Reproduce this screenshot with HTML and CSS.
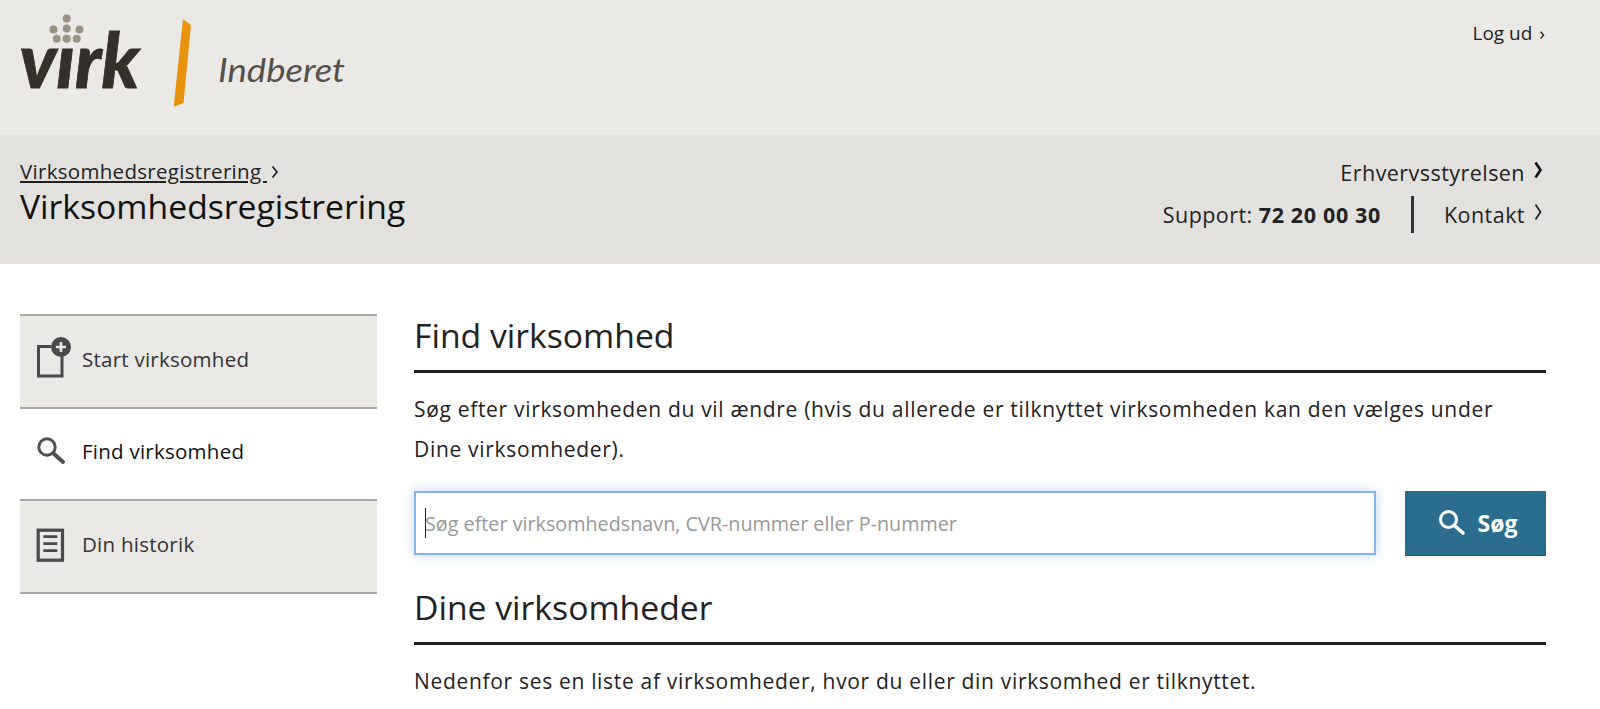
FILE: index.html
```html
<html>
<head>
	<title>Virksomhedsregistrering</title>
	<meta http-equiv="Content-Type" content="text/html; charset=UTF-8">
	<link rel="stylesheet" href="styles.css">
</head>
<body>
	<div class="top-bar">
		<svg class="logo" width="360" height="115" viewBox="0 0 360 115">
			<text class="logo-virk" x="19.5" y="88" textLength="120" lengthAdjust="spacingAndGlyphs">virk</text>
			<rect x="50" y="12" width="34" height="36" fill="#eae9e5"></rect>
			<g fill="#9a9385">
				<circle cx="66.7" cy="18.5" r="4"></circle>
				<circle cx="53.5" cy="29.5" r="4"></circle>
				<circle cx="66.7" cy="28.5" r="4"></circle>
				<circle cx="79.5" cy="29.5" r="4"></circle>
				<circle cx="56.7" cy="38.7" r="4"></circle>
				<circle cx="66.7" cy="38.7" r="4"></circle>
				<circle cx="76.7" cy="38.7" r="4"></circle>
			</g>
			<polygon points="183,19 191,25 183.5,103 173.7,106.7" fill="#e8920e"></polygon>
			<text class="logo-name" x="218" y="82" textLength="127" lengthAdjust="spacingAndGlyphs">Indberet</text>
		</svg>
		<a class="logout">Log ud <span class="logout-arrow">›</span></a>
	</div>

	<div class="sub-bar">
		<div class="sub-left">
			<div class="crumb"><a>Virksomhedsregistrering </a><svg class="chev-small" width="8" height="14" viewBox="0 0 8 14"><path d="M1.5 1.5 L6 7 L1.5 12.5" fill="none" stroke="#222" stroke-width="1.7"></path></svg></div>
			<div class="page-title">Virksomhedsregistrering</div>
		</div>
		<div class="sub-right">
			<div class="sub-row">
				<a>Erhvervsstyrelsen</a>
				<svg class="chev" width="10" height="18" viewBox="0 0 10 18"><path d="M1.5 1.5 L6.5 9 L1.5 16.5" fill="none" stroke="#111" stroke-width="2.6"></path></svg>
			</div>
			<div class="sub-row">
				<span>Support: <b>72 20 00 30</b></span>
				<span class="divider"></span>
				<a>Kontakt</a>
				<svg class="chev" width="10" height="18" viewBox="0 0 10 18"><path d="M1.5 1.5 L6.5 9 L1.5 16.5" fill="none" stroke="#222" stroke-width="1.8"></path></svg>
			</div>
		</div>
	</div>

	<div class="page">
		<div class="side-menu">
			<div class="menu-item">
				<svg class="menu-icon raised" width="36" height="42" viewBox="0 0 36 42">
					<path d="M15 10.5 H2.5 V40 H26 V20" fill="none" stroke="#4a4a4a" stroke-width="3"></path>
					<circle cx="25" cy="11" r="10" fill="#4a4a4a"></circle>
					<path d="M25 6 V16 M20 11 H30" stroke="#eae9e5" stroke-width="2.6"></path>
				</svg>
				<span class="menu-label">Start virksomhed</span>
			</div>
			<div class="menu-item active">
				<svg class="menu-icon" width="36" height="32" viewBox="0 0 36 32">
					<circle cx="11" cy="11" r="8.2" fill="none" stroke="#4f4f4f" stroke-width="3"></circle>
					<path d="M17.5 17.5 L27 26" stroke="#4f4f4f" stroke-width="4" stroke-linecap="round"></path>
				</svg>
				<span class="menu-label">Find virksomhed</span>
			</div>
			<div class="menu-item">
				<svg class="menu-icon" width="36" height="34" viewBox="0 0 36 34">
					<rect x="2.2" y="2.2" width="24.3" height="30" fill="none" stroke="#4a4a4a" stroke-width="3.2"></rect>
					<path d="M7.3 8.7 H21.3 M7.3 15.7 H21.3 M7.3 22.7 H21.3" stroke="#4a4a4a" stroke-width="2.8"></path>
				</svg>
				<span class="menu-label">Din historik</span>
			</div>
		</div>

		<div class="main-col">
			<h2 class="section-head">Find virksomhed</h2>
			<p class="intro">Søg efter virksomheden du vil ændre (hvis du allerede er tilknyttet virksomheden kan den vælges under Dine virksomheder).</p>
			<div class="search-row">
				<div class="search-input">
					<span class="caret"></span>
					<span class="placeholder">Søg efter virksomhedsnavn, CVR-nummer eller P-nummer</span>
				</div>
				<div class="search-button">
					<svg width="30" height="30" viewBox="0 0 30 30">
						<circle cx="11.5" cy="11.5" r="8" fill="none" stroke="#fff" stroke-width="3"></circle>
						<path d="M17.5 17.5 L26 25" stroke="#fff" stroke-width="3.6" stroke-linecap="round"></path>
					</svg>
					<span>Søg</span>
				</div>
			</div>
			<h2 class="section-head second">Dine virksomheder</h2>
			<p class="intro">Nedenfor ses en liste af virksomheder, hvor du eller din virksomhed er tilknyttet.</p>
		</div>
	</div>
</body>
</html>
```

FILE: styles.css
```css
html, body {
	margin: 0;
	padding: 0;
	height: 100%;
	overflow: hidden;
	background-color: #fff;
	font-family: "Open Sans", "Noto Sans", sans-serif;
	color: #222;
}

.top-bar {
	display: flex;
	justify-content: space-between;
	height: 135px;
	background-color: #eae9e5;
}

.logo {
	display: block;
}

.logo-virk {
	font-family: Lato, sans-serif;
	font-weight: 900;
	font-style: italic;
	font-size: 76px;
	fill: #36302a;
	stroke: #36302a;
	stroke-width: 0.8px;
}

.logo-name {
	font-family: Lato, sans-serif;
	font-style: italic;
	font-size: 32px;
	fill: #55504c;
}

.logout {
	padding: 20px 55px 0 0;
	font-size: 19px;
	line-height: 26px;
}

.logout-arrow {
	margin-left: 2px;
}

.sub-bar {
	display: flex;
	justify-content: space-between;
	height: 129px;
	padding: 24px 56px 0 20px;
	box-sizing: border-box;
	background-color: #e2e1de;
}

.crumb {
	font-size: 20.5px;
	letter-spacing: 0.3px;
	line-height: 24px;
}

.crumb a {
	text-decoration: underline;
}

.chev-small {
	margin-left: 4px;
}

.page-title {
	margin-top: 3px;
	font-size: 33.7px;
	line-height: 40px;
	color: #111;
}

.sub-right {
	display: flex;
	flex-direction: column;
	align-items: flex-end;
	margin-top: -8px;
	font-size: 21.5px;
	letter-spacing: 0.45px;
}

.sub-right b {
	letter-spacing: 0.65px;
}

.sub-row {
	display: flex;
	align-items: center;
	height: 42px;
}

.sub-row .chev {
	margin-left: 9px;
	margin-top: -4px;
}

.divider {
	width: 3px;
	height: 37px;
	margin: 0 30px;
	background-color: #333;
}

.page {
	display: flex;
	padding: 50px 54px 0 20px;
}

.side-menu {
	align-self: flex-start;
	width: 357px;
	flex-shrink: 0;
	margin-right: 37px;
	border-bottom: 2px solid #a8a8a8;
}

.menu-item {
	display: flex;
	align-items: center;
	height: 92.5px;
	padding: 0 0 3px 16px;
	box-sizing: border-box;
	border-top: 2px solid #a8a8a8;
	background-color: #eae9e5;
	font-size: 20.5px;
	letter-spacing: 0.25px;
	color: #333;
}

.menu-item.active {
	background-color: #fff;
	color: #111;
}

.menu-icon {
	margin-right: 10px;
}

.menu-icon.raised {
	margin-bottom: 6px;
}

.menu-label {
	margin-bottom: 2px;
}

.main-col {
	flex: 1;
	min-width: 0;
}

.section-head {
	margin: 0;
	height: 56px;
	border-bottom: 3px solid #222;
	font-size: 33.7px;
	font-weight: 400;
	line-height: 42px;
	color: #222;
}

.section-head.second {
	margin-top: 30px;
}

.intro {
	max-width: 1100px;
	margin: 16px 0 0;
	font-size: 21px;
	letter-spacing: 0.68px;
	line-height: 40px;
	color: #222;
}

.search-row {
	display: flex;
	justify-content: space-between;
	margin-top: 22px;
}

.search-input {
	display: flex;
	align-items: center;
	width: 962px;
	height: 64px;
	padding-left: 9px;
	box-sizing: border-box;
	border: 2px solid #85b5ee;
	box-shadow: 0 0 10px rgba(110, 165, 235, 0.45);
	background-color: #fff;
}

.caret {
	width: 1px;
	height: 30px;
	background-color: #222;
}

.placeholder {
	margin-left: -1px;
	font-size: 19.75px;
	color: #999;
}

.search-button {
	display: flex;
	align-items: center;
	justify-content: center;
	gap: 11px;
	width: 141px;
	height: 65px;
	padding-left: 3px;
	background-color: #2b6d8f;
	border-bottom: 1px solid #0d5a80;
	box-sizing: border-box;
	font-size: 23px;
	font-weight: 700;
	color: #fff;
}
```
